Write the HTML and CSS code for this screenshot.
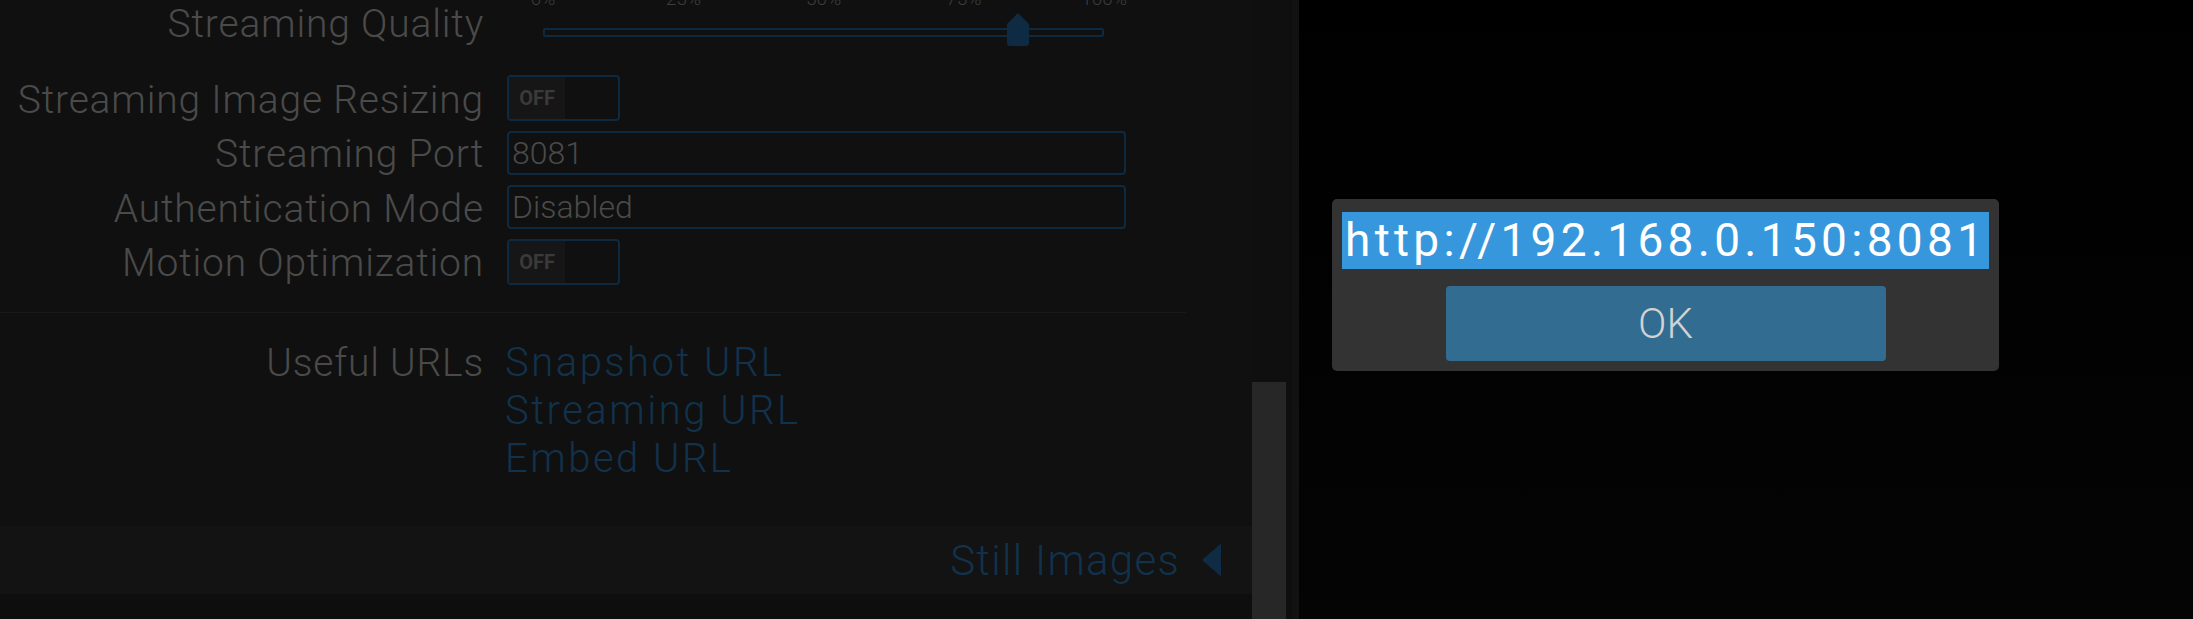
FILE: index.html
```html
<!DOCTYPE html>
<html lang="en">

    <head>
        <meta charset="UTF-8">
        <meta name="viewport" content="width=device-width, initial-scale=1.0">
        <title>motionEye - Streaming URL</title>
        <link rel="stylesheet" href="styles.css">
    </head>

    <body>
        <div class="screen">
            <!-- Settings panel (dimmed behind the dialog) -->
            <div class="settings">
                <div class="section">
                    <div class="row row-slider">
                        <div class="label">Streaming Quality</div>
                        <div class="control">
                            <div class="slider">
                                <div class="ticks">
                                    <span>0%</span><span>25%</span><span>50%</span><span>75%</span><span>100%</span>
                                </div>
                                <div class="track">
                                    <div class="thumb"></div>
                                </div>
                            </div>
                        </div>
                    </div>

                    <div class="row">
                        <div class="label">Streaming Image Resizing</div>
                        <div class="control">
                            <div class="toggle"><span class="toggle-off">OFF</span></div>
                        </div>
                    </div>

                    <div class="row">
                        <div class="label">Streaming Port</div>
                        <div class="control">
                            <div class="field">8081</div>
                        </div>
                    </div>

                    <div class="row">
                        <div class="label">Authentication Mode</div>
                        <div class="control">
                            <div class="field">Disabled</div>
                        </div>
                    </div>

                    <div class="row">
                        <div class="label">Motion Optimization</div>
                        <div class="control">
                            <div class="toggle"><span class="toggle-off">OFF</span></div>
                        </div>
                    </div>
                </div>

                <div class="divider"></div>

                <div class="section">
                    <div class="row row-urls">
                        <div class="label">Useful URLs</div>
                        <div class="control links">
                            <a href="#">Snapshot URL</a>
                            <a href="#">Streaming URL</a>
                            <a href="#">Embed URL</a>
                        </div>
                    </div>
                </div>

                <div class="section-bar">
                    <span>Still Images</span>
                    <span class="arrow"></span>
                </div>

                <div class="settings-rest"></div>
            </div>

            <!-- Scrollbar of the settings panel -->
            <div class="scrollbar">
                <div class="scroll-thumb"></div>
            </div>
            <div class="gutter"></div>
            <div class="gutter-light"></div>

            <!-- Camera area with the URL dialog -->
            <div class="viewer">
                <div class="dialog">
                    <div class="url"><span>http://192.168.0.150:8081</span></div>
                    <button class="ok-btn">OK</button>
                </div>
            </div>
        </div>
    </body>

</html>
```

FILE: styles.css
```css
* {
    box-sizing: border-box;
}

body {
    margin: 0;
    background-color: #000;
    font-family: Roboto, "Liberation Sans", sans-serif;
    overflow: hidden;
}

.screen {
    display: flex;
    height: 619px;
}

/* Settings panel */
.settings {
    display: flex;
    flex-direction: column;
    width: 1252px;
    flex: none;
    background-color: #101010;
}

.row {
    display: grid;
    grid-template-columns: 482px 1fr;
    column-gap: 25px;
    align-items: center;
    width: 1186px;
    height: 54.5px;
}

.label {
    margin-right: -2px;
    padding-top: 3px;
    text-align: right;
    color: #4a4a4a;
    font-size: 39px;
    font-weight: 300;
    letter-spacing: 0.8px;
    white-space: nowrap;
}

.row-slider {
    align-items: start;
    height: 71px;
}

.row-slider .label {
    padding-top: 0;
    line-height: 49px;
}

/* Slider */
.slider {
    margin-left: 36px;
    width: 561px;
}

.ticks {
    display: grid;
    grid-template-columns: repeat(5, 140.25px);
    margin-top: -11px;
    margin-left: -70px;
    height: 20px;
    line-height: 20px;
    font-size: 19px;
    font-weight: 300;
    color: #3d3d3d;
    text-align: center;
}

.track {
    position: relative;
    margin-top: 19px;
    height: 9px;
    border: 2px solid #0d2a40;
    border-radius: 2px;
}

.thumb {
    position: absolute;
    top: -17px;
    left: 462px;
    width: 22px;
    height: 33px;
    background-color: #0e2b43;
    border-radius: 0 0 3px 3px;
    clip-path: polygon(50% 0, 100% 11px, 100% 100%, 0 100%, 0 11px);
}

/* Toggle switch */
.toggle {
    display: flex;
    width: 113px;
    height: 46px;
    border: 2px solid #0d2a40;
    border-radius: 4px;
    overflow: hidden;
}

.toggle-off {
    width: 56px;
    background-color: #161616;
    color: #3a3a3a;
    font-size: 20px;
    font-weight: 700;
    line-height: 42px;
    text-align: center;
}

/* Text fields */
.field {
    width: 619px;
    height: 44px;
    padding-left: 3px;
    border: 2px solid #0d2a40;
    border-radius: 4px;
    color: #4a4a4a;
    font-size: 32px;
    font-weight: 300;
    line-height: 40px;
}

.divider {
    margin-top: 23px;
    width: 1186px;
    height: 1px;
    background-color: #191919;
}

.row-urls {
    align-items: start;
    height: auto;
    margin-top: 26px;
}

.row-urls .label {
    padding-top: 0;
    line-height: 48px;
}

.links {
    display: flex;
    flex-direction: column;
    align-items: flex-start;
    margin-left: -2px;
}

.links a {
    color: #12324c;
    font-size: 40px;
    font-weight: 300;
    letter-spacing: 2.5px;
    line-height: 48px;
    text-decoration: none;
}

/* Collapsed section header */
.section-bar {
    display: flex;
    justify-content: flex-end;
    align-items: center;
    margin-top: 43px;
    height: 68px;
    padding-right: 31px;
    background-color: #131313;
    color: #12324c;
    font-size: 42px;
    font-weight: 300;
    letter-spacing: 1.3px;
}

.arrow {
    margin-left: 22px;
    width: 19px;
    height: 33px;
    background-color: #0f2c44;
    clip-path: polygon(100% 0, 100% 100%, 0 50%);
}

.settings-rest {
    flex: 1;
    background-color: #0e0e0e;
}

/* Scrollbar */
.scrollbar {
    display: flex;
    flex-direction: column;
    width: 34px;
    flex: none;
    padding-top: 382px;
    background-color: #0f0f0f;
}

.scroll-thumb {
    flex: 1;
    background-color: #272727;
}

.gutter {
    width: 6px;
    flex: none;
    background-color: #0f0f0f;
}

.gutter-light {
    width: 7px;
    flex: none;
    background-color: #121212;
}

/* Camera view + dialog */
.viewer {
    flex: 1;
    padding: 199px 0 0 33px;
    background: linear-gradient(#000, #040404);
}

.dialog {
    width: 667px;
    height: 172px;
    padding: 13px 10px 10px;
    background-color: #333;
    border-radius: 5px;
}

.url {
    height: 57px;
    background-color: #3797dc;
    color: #fff;
    font-size: 46px;
    line-height: 57px;
    letter-spacing: 4.3px;
    padding-left: 3px;
    white-space: nowrap;
    overflow: hidden;
}

.ok-btn {
    display: block;
    margin: 17px auto 0;
    width: 440px;
    height: 75px;
    border: none;
    border-radius: 4px;
    background-color: #336c91;
    color: #d2d2d2;
    font-family: Roboto, "Liberation Sans", sans-serif;
    font-size: 42px;
    font-weight: 300;
}
```
